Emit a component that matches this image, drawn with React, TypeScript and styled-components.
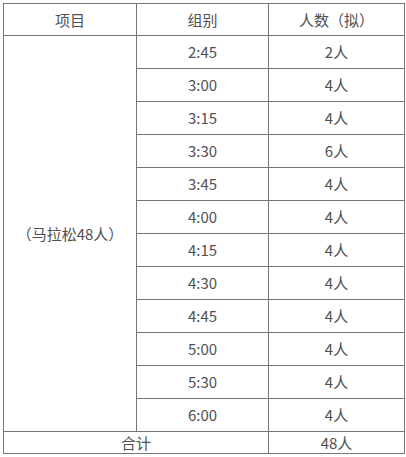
import React from "react";
import styled, { createGlobalStyle } from "styled-components";

const GlobalStyle = createGlobalStyle`
  html, body {
    margin: 0;
    padding: 0;
    background: #ffffff;
  }
  body {
    font-family: "Noto Sans CJK SC", "Noto Sans", sans-serif;
  }
`;

const groups = [
  { time: "2:45", count: "2人" },
  { time: "3:00", count: "4人" },
  { time: "3:15", count: "4人" },
  { time: "3:30", count: "6人" },
  { time: "3:45", count: "4人" },
  { time: "4:00", count: "4人" },
  { time: "4:15", count: "4人" },
  { time: "4:30", count: "4人" },
  { time: "4:45", count: "4人" },
  { time: "5:00", count: "4人" },
  { time: "5:30", count: "4人" },
  { time: "6:00", count: "4人" },
];

const Page = styled.div`
  padding: 3px 0 0 3px;
`;

const Table = styled.table`
  border-collapse: collapse;
  table-layout: fixed;
  width: 401px;
  color: #505050;
  font-size: 15px;
`;

const Cell = styled.td<{ $h?: number }>`
  border: 1px solid #747474;
  padding: 0;
  height: ${(p) => p.$h ?? 32}px;
  text-align: center;
  vertical-align: middle;
  line-height: 18px;
  box-sizing: border-box;
`;

export default function App() {
  return (
    <>
      <GlobalStyle />
      <Page>
        <Table>
          <colgroup>
            <col style={{ width: 133 }} />
            <col style={{ width: 132 }} />
            <col style={{ width: 136 }} />
          </colgroup>
          <tbody>
            <tr>
              <Cell $h={32}>项目</Cell>
              <Cell $h={32}>组别</Cell>
              <Cell $h={32}>人数（拟）</Cell>
            </tr>
            {groups.map((g, i) => (
              <tr key={g.time}>
                {i === 0 && <Cell rowSpan={groups.length}>（马拉松48人）</Cell>}
                <Cell $h={33}>{g.time}</Cell>
                <Cell $h={33}>{g.count}</Cell>
              </tr>
            ))}
            <tr>
              <Cell colSpan={2} $h={22}>合计</Cell>
              <Cell $h={22}>48人</Cell>
            </tr>
          </tbody>
        </Table>
      </Page>
    </>
  );
}
